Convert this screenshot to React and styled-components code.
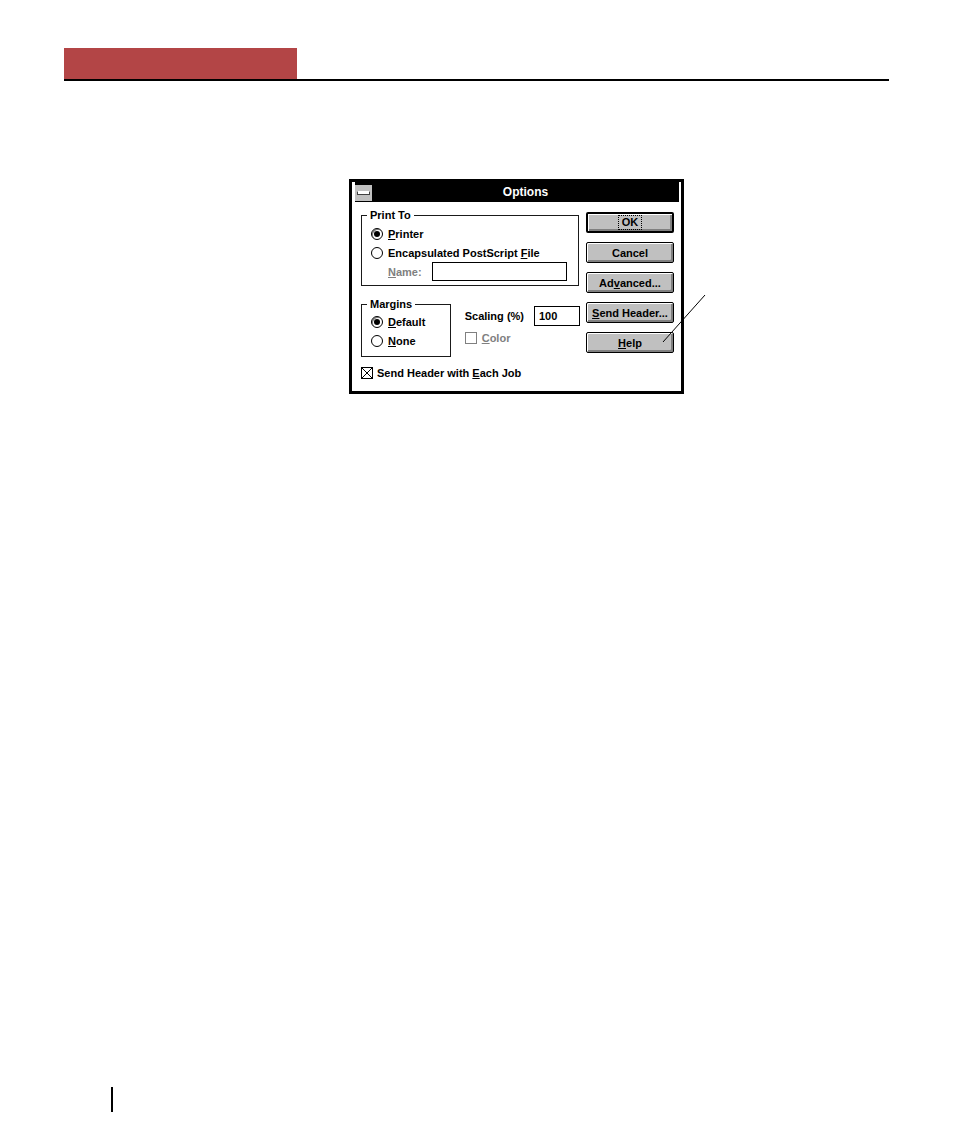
import styled, { createGlobalStyle, css } from "styled-components"

const GlobalStyle = createGlobalStyle`
  html, body {
    margin: 0;
    padding: 0;
    background: #fff;
  }
  body {
    font-family: "Liberation Sans", Arial, sans-serif;
    -webkit-font-smoothing: none;
  }
`

const Page = styled.div`
  width: 954px;
  min-height: 1145px;
  padding: 48px 0 0 64px;
  box-sizing: border-box;
`

const Header = styled.div`
  width: 825px;
  border-bottom: 2px solid #000;
`

const RedTab = styled.div`
  width: 233px;
  height: 31px;
  background: #b34546;
`

const Figure = styled.div`
  position: relative;
  width: 335px;
  margin: 98px 0 0 285px;
`

const Callout = styled.svg`
  position: absolute;
  left: 310px;
  top: 112px;
  overflow: visible;
`

const Dialog = styled.div`
  border: 3px solid #000;
  background: #fff;
  padding: 0 2px 0 3px;
  font-size: 11px;
  font-weight: 700;
  color: #000;
`

const TitleBar = styled.div`
  height: 20px;
  background: #000;
  display: flex;
  align-items: flex-end;
`

const SysMenu = styled.div`
  width: 17px;
  height: 16px;
  margin-bottom: 1px;
  background: #c0c0c0;
  display: flex;
  align-items: center;
  justify-content: center;
`

const SysDash = styled.div`
  width: 11px;
  height: 2px;
  background: #fff;
  border: 1px solid #404040;
  border-top-color: #fff;
`

const Title = styled.div`
  flex: 1;
  text-align: center;
  color: #fff;
  font-size: 12px;
  line-height: 20px;
  align-self: stretch;
`

const Body = styled.div`
  display: flex;
  gap: 6px;
  padding: 7px 5px 9px 6px;
`

const LeftCol = styled.div`
  width: 219px;
  display: flex;
  flex-direction: column;
`

const Group = styled.fieldset`
  margin: 0;
  padding: 0 0 ${p => p.$bottom}px 9px;
  border: 1px solid #1a1a1a;
  width: ${p => p.$width}px;
  box-sizing: border-box;
  min-inline-size: 0;
`

const Legend = styled.legend`
  padding: 0 3px;
  margin-left: -4px;
  line-height: 12px;
  height: 12px;
`

const Rows = styled.div`
  padding-top: ${p => p.$top}px;
  display: flex;
  flex-direction: column;
`

const Row = styled.div`
  height: ${p => p.$h || 19}px;
  display: flex;
  align-items: center;
  gap: ${p => p.$gap ?? 5}px;
  margin-top: ${p => p.$mt || 0}px;
  color: ${p => (p.$disabled ? "#808080" : "#000")};
  white-space: nowrap;
`

const Radio = styled.span`
  width: 12px;
  height: 12px;
  box-sizing: border-box;
  border: 1px solid #000;
  border-radius: 50%;
  background: #fff;
  display: flex;
  align-items: center;
  justify-content: center;
  flex: none;
  ${p =>
    p.$on &&
    css`
      box-shadow: inset 1px 1px 0 #808080;
      &::after {
        content: "";
        width: 6px;
        height: 6px;
        border-radius: 50%;
        background: #000;
      }
    `}
`

const Check = styled.span`
  width: 12px;
  height: 12px;
  box-sizing: border-box;
  border: 1px solid ${p => (p.$disabled ? "#808080" : "#000")};
  background: #fff;
  flex: none;
  display: flex;
`

const NameRow = styled.div`
  height: 19px;
  display: flex;
  align-items: center;
  padding-left: 17px;
  color: #808080;
`

const NameLabel = styled.span`
  width: 44px;
`

const TextBox = styled.div`
  width: ${p => p.$width}px;
  height: ${p => p.$height}px;
  box-sizing: border-box;
  border: 1px solid #000;
  background: #fff;
  color: #000;
  padding-left: 4px;
  display: flex;
  align-items: center;
`

const MidRow = styled.div`
  display: flex;
  margin-top: 12px;
  gap: 14px;
`

const ScaleCol = styled.div`
  display: flex;
  flex-direction: column;
  padding-top: 8px;
`

const ButtonCol = styled.div`
  display: flex;
  flex-direction: column;
  gap: 9px;
  margin-top: 3px;
`

const PushButton = styled.button`
  width: 88px;
  height: 21px;
  box-sizing: border-box;
  padding: 0;
  border: ${p => (p.$default ? 2 : 1)}px solid #000;
  border-radius: 2px;
  background: #c0c0c0;
  box-shadow: inset 1px 1px 0 #fff, inset -2px -2px 0 #808080;
  font: inherit;
  color: #000;
  display: flex;
  align-items: center;
  justify-content: center;
  cursor: pointer;
`

const Focus = styled.span`
  outline: 1px dotted #000;
  padding: 0 3px;
  line-height: 13px;
`

const FooterRule = styled.div`
  width: 2px;
  height: 25px;
  background: #000;
  margin: 693px 0 0 47px;
`

const CrossMark = () => (
  <svg width="10" height="10" viewBox="0 0 10 10">
    <path d="M0 0L10 10M10 0L0 10" stroke="#000" strokeWidth="1" />
  </svg>
)

const App = () => {
  return (
    <>
      <GlobalStyle />
      <Page>
        <Header>
          <RedTab />
        </Header>

        <Figure>
          <Dialog>
            <TitleBar>
              <SysMenu>
                <SysDash />
              </SysMenu>
              <Title>Options</Title>
            </TitleBar>
            <Body>
              <LeftCol>
                <Group $width={218} $bottom={4}>
                  <Legend>Print To</Legend>
                  <Rows $top={3}>
                    <Row>
                      <Radio $on />
                      <span><u>P</u>rinter</span>
                    </Row>
                    <Row>
                      <Radio />
                      <span>Encapsulated PostScript <u>F</u>ile</span>
                    </Row>
                    <NameRow>
                      <NameLabel><u>N</u>ame:</NameLabel>
                      <TextBox $width={135} $height={19} />
                    </NameRow>
                  </Rows>
                </Group>

                <MidRow>
                  <Group $width={90} $bottom={6}>
                    <Legend>Margins</Legend>
                    <Rows $top={2}>
                      <Row>
                        <Radio $on />
                        <span><u>D</u>efault</span>
                      </Row>
                      <Row>
                        <Radio />
                        <span><u>N</u>one</span>
                      </Row>
                    </Rows>
                  </Group>
                  <ScaleCol>
                    <Row $h={20} $gap={10}>
                      <span>Scalin<u>g</u> (%)</span>
                      <TextBox $width={46} $height={20}>100</TextBox>
                    </Row>
                    <Row $h={20} $mt={2} $disabled>
                      <Check $disabled />
                      <span><u>C</u>olor</span>
                    </Row>
                  </ScaleCol>
                </MidRow>

                <Row $h={18} $mt={7} $gap={4}>
                  <Check>
                    <CrossMark />
                  </Check>
                  <span>Send Header with <u>E</u>ach Job</span>
                </Row>
              </LeftCol>

              <ButtonCol>
                <PushButton $default>
                  <Focus>OK</Focus>
                </PushButton>
                <PushButton>Cancel</PushButton>
                <PushButton>Ad<u>v</u>anced...</PushButton>
                <PushButton><u>S</u>end Header...</PushButton>
                <PushButton><u>H</u>elp</PushButton>
              </ButtonCol>
            </Body>
          </Dialog>
          <Callout width="50" height="55">
            <line x1="4" y1="51" x2="46" y2="4" stroke="#000" strokeWidth="1" />
          </Callout>
        </Figure>

        <FooterRule />
      </Page>
    </>
  )
}

export default App
